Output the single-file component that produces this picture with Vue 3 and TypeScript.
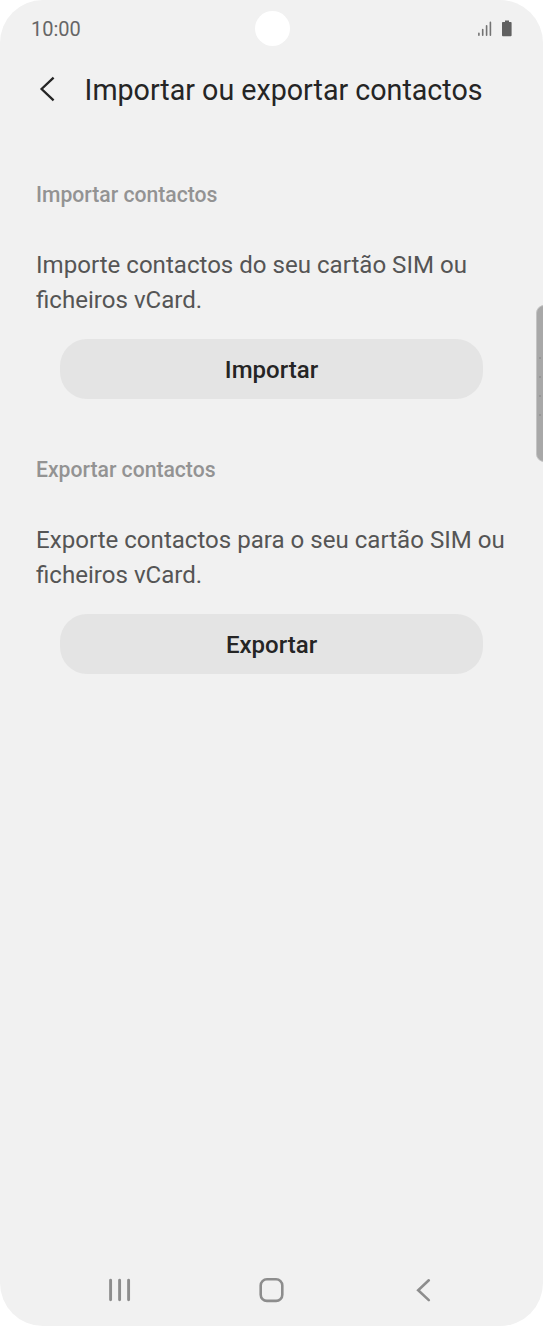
<script setup lang="ts">
interface Section {
  heading: string
  lines: string[]
  action: string
}

const sections: Section[] = [
  {
    heading: 'Importar contactos',
    lines: ['Importe contactos do seu cartão SIM ou', 'ficheiros vCard.'],
    action: 'Importar',
  },
  {
    heading: 'Exportar contactos',
    lines: ['Exporte contactos para o seu cartão SIM ou', 'ficheiros vCard.'],
    action: 'Exportar',
  },
]
</script>

<template>
  <div class="screen">
    <header class="status">
      <span class="time">10:00</span>
      <span class="camera"></span>
      <svg class="indicators" width="36" height="18" viewBox="0 0 36 18">
        <g stroke="#737373" stroke-width="1.6" stroke-linecap="round">
          <path d="M1.9 13.2V15.2M5.7 9.6V15.2M9.6 5.7V15.2M13.4 2.4V15.2" />
        </g>
        <path d="M28 0.5h4v1.5h1.8q.8 0 .8.8v12.5q0 .9-.9.9h-7.8q-.9 0-.9-.9V2.8q0-.8.8-.8h2.2z" fill="#606060" />
      </svg>
    </header>

    <div class="titlebar">
      <svg class="back" width="18" height="26" viewBox="0 0 18 26">
        <path d="M15.6 1.7L3.6 13L15.6 24.4" fill="none" stroke="#252525" stroke-width="2.3" />
      </svg>
      <h1 class="title">Importar ou exportar contactos</h1>
    </div>

    <main class="content">
      <section v-for="s in sections" :key="s.action" class="section">
        <h2 class="heading">{{ s.heading }}</h2>
        <p class="text">
          <span v-for="line in s.lines" :key="line" class="line">{{ line }}</span>
        </p>
        <button class="action" type="button">{{ s.action }}</button>
      </section>
    </main>

    <nav class="nav">
      <svg width="24" height="24" viewBox="0 0 24 24">
        <path d="M3.6 2.2V21.8M12.6 2.2V21.8M21.6 2.2V21.8" stroke="#8d8d8d" stroke-width="2.9" stroke-linecap="round" />
      </svg>
      <svg width="26" height="26" viewBox="0 0 26 26">
        <rect x="1.7" y="2.3" width="21.6" height="21.6" rx="6.2" fill="none" stroke="#8d8d8d" stroke-width="2.6" />
      </svg>
      <svg width="24" height="24" viewBox="0 0 24 24">
        <path d="M16.8 2.3L6.2 12.2L16.8 22.1" fill="none" stroke="#8d8d8d" stroke-width="2.6" stroke-linecap="round" />
      </svg>
    </nav>

    <div class="edge">
      <i v-for="n in 4" :key="n" class="dot"></i>
    </div>
  </div>
</template>

<style>
html,
body {
  margin: 0;
  background: #fff;
}
</style>

<style scoped>
.screen {
  position: relative;
  box-sizing: border-box;
  width: 543px;
  height: 1326px;
  overflow: hidden;
  display: flex;
  flex-direction: column;
  background: #f1f1f1;
  border-radius: 43px;
  font-family: Roboto, 'Liberation Sans', sans-serif;
  color: #252525;
}
.status {
  display: grid;
  grid-template-columns: 1fr 35px 1fr;
  align-items: center;
  height: 57px;
  padding: 0 31px 0 31px;
}
.time {
  padding-top: 1px;
  font-size: 20px;
  line-height: 24px;
  color: #666;
}
.camera {
  width: 35px;
  height: 35px;
  margin-left: 0.5px;
  border-radius: 50%;
  background: #fff;
}
.indicators {
  justify-self: end;
  margin-right: -1px;
}
.titlebar {
  display: flex;
  align-items: center;
  height: 65px;
  padding-left: 38px;
}
.back {
  margin-top: -2px;
}
.title {
  margin: 0 0 0 28.6px;
  font-size: 28.65px;
  font-weight: 400;
  line-height: 36px;
  white-space: nowrap;
}
.content {
  flex: 1;
  padding: 58px 36px 0;
}
.section {
  height: 274.5px;
}
.heading {
  margin: 0;
  font-size: 21.15px;
  font-weight: 500;
  line-height: 29px;
  color: #939393;
}
.text {
  margin: 39px 0 0;
  font-size: 24.08px;
  line-height: 35px;
  color: #555;
}
.line {
  display: block;
  white-space: nowrap;
}
.action {
  display: block;
  width: 423px;
  height: 60px;
  margin: 21px 0 0 24px;
  padding: 2px 0 0;
  border: 0;
  border-radius: 27px;
  background: #e4e4e4;
  font-family: inherit;
  font-size: 24px;
  font-weight: 500;
  line-height: 58px;
  color: #252525;
}
.nav {
  display: flex;
  align-items: center;
  justify-content: space-between;
  height: 72px;
  padding: 0 107px 0 107px;
}
.edge {
  position: absolute;
  top: 305px;
  right: -11px;
  box-sizing: border-box;
  width: 18.5px;
  height: 157px;
  padding: 51px 0 0 2px;
  border: 1px solid #c4c4c4;
  border-radius: 8px;
  background: #a8a8a8;
}
.dot {
  display: block;
  width: 2px;
  height: 2px;
  margin-bottom: 17px;
  border-radius: 1px;
  background: #929292;
}
</style>
